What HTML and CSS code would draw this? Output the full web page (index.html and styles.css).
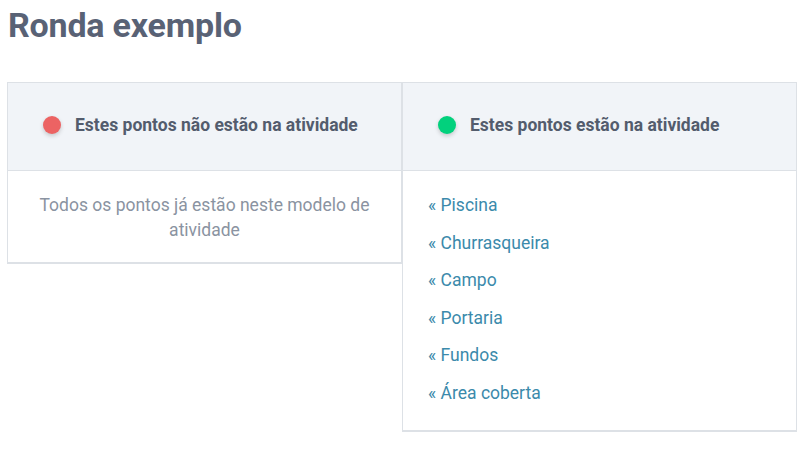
FILE: index.html
```html
<!DOCTYPE html>
<html lang="pt">
<head>
<meta charset="utf-8">
<title>Ronda exemplo</title>
<link rel="stylesheet" href="styles.css">
</head>
<body>
<h1 class="title">Ronda exemplo</h1>
<div class="columns">
  <section class="card">
    <header class="card-head">
      <span class="dot dot-red"></span>
      <span class="head-text">Estes pontos não estão na atividade</span>
    </header>
    <div class="card-body empty">Todos os pontos já estão neste modelo de atividade</div>
  </section>
  <section class="card">
    <header class="card-head">
      <span class="dot dot-green"></span>
      <span class="head-text">Estes pontos estão na atividade</span>
    </header>
    <ul class="card-body points">
      <li>« Piscina</li>
      <li>« Churrasqueira</li>
      <li>« Campo</li>
      <li>« Portaria</li>
      <li>« Fundos</li>
      <li>« Área coberta</li>
    </ul>
  </section>
</div>
</body>
</html>
```
FILE: styles.css
```css
* { box-sizing: border-box; }
body {
  margin: 0;
  padding: 0 0 0 7px;
  font-family: Roboto, "Liberation Sans", sans-serif;
  background: #ffffff;
}
.title {
  margin: 0;
  padding: 4px 0 0 1px;
  font-size: 34px;
  line-height: 42px;
  font-weight: 700;
  color: #596275;
  letter-spacing: -0.2px;
}
.columns {
  display: grid;
  grid-template-columns: 395px 395px;
  align-items: start;
  margin-top: 36px;
}
.card {
  border: 1px solid #dde1e6;
  border-bottom-width: 2px;
  background: #fff;
}
.card-head {
  height: 88px;
  background: #f1f4f8;
  border-bottom: 1px solid #dde1e6;
  display: flex;
  align-items: center;
  padding: 0 0 4px 34px;
  gap: 14px;
}
.dot {
  width: 18px;
  height: 18px;
  border-radius: 50%;
  box-shadow: 0 2px 4px rgba(0,0,0,0.18);
  flex: none;
  margin-left: 1px;
}
.dot-red { background: #ec6363; }
.dot-green { background: #02d17d; }
.head-text {
  font-size: 17.5px;
  font-weight: 700;
  color: #535c6d;
}
.card-body { margin: 0; }
.empty {
  padding: 22px 20px 19px;
  text-align: center;
  font-size: 17.5px;
  line-height: 25px;
  color: #8a93a1;
}
.points {
  list-style: none;
  padding: 16px 0 18px 25px;
}
.points li {
  font-size: 17.5px;
  line-height: 37.5px;
  color: #3b8aab;
}
```
